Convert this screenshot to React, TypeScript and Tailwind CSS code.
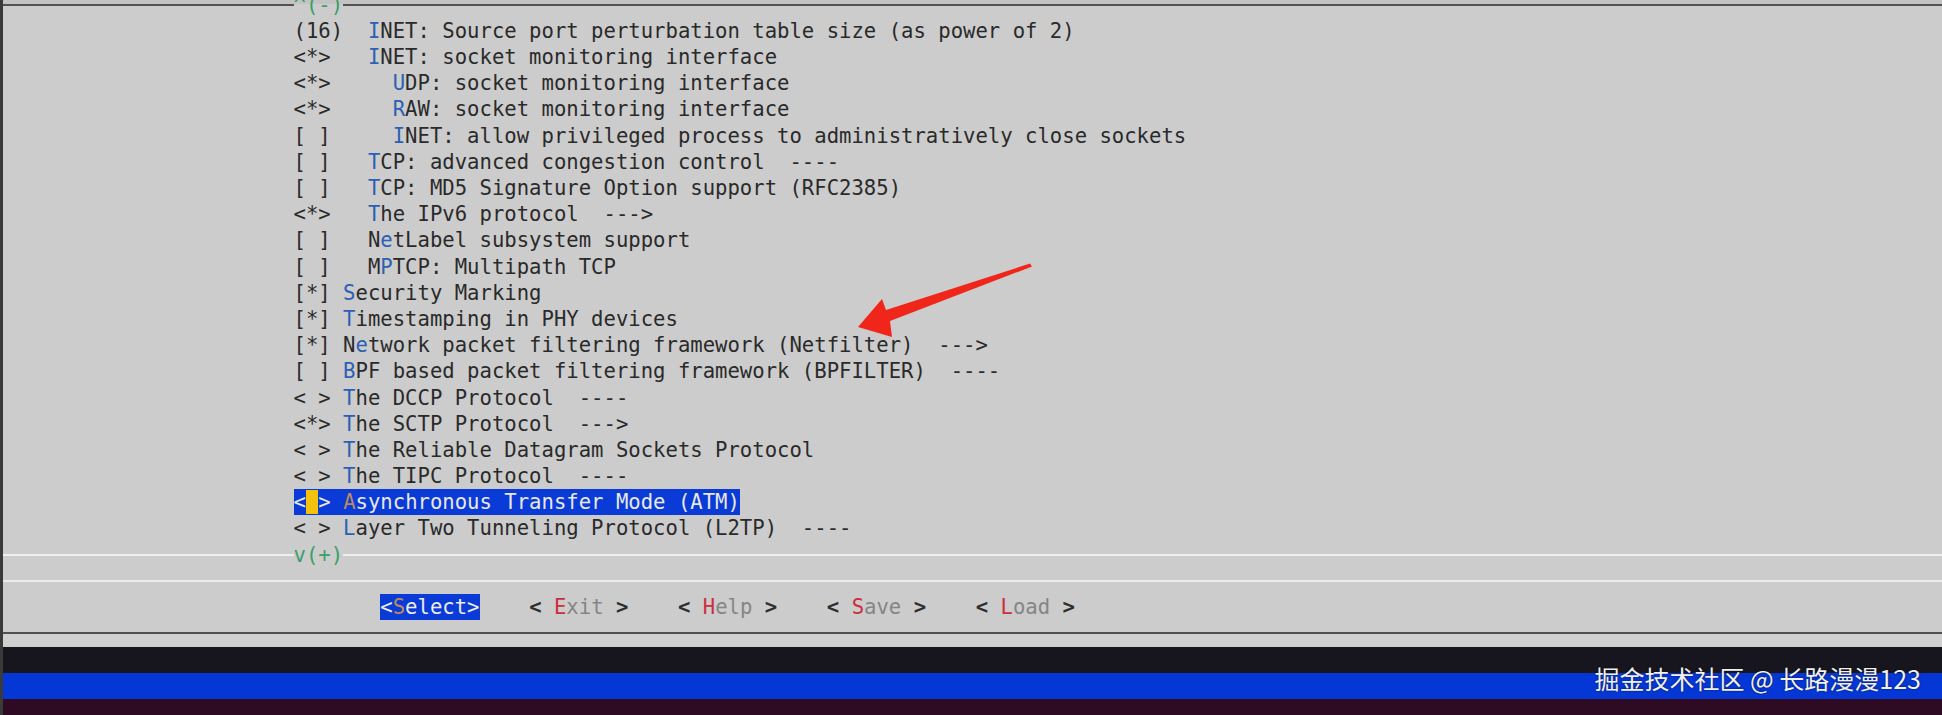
const items: [string, string, string, string][] = [
  ['(16)  ', '', 'I', 'NET: Source port perturbation table size (as power of 2)'],
  ['<*>   ', '', 'I', 'NET: socket monitoring interface'],
  ['<*>     ', '', 'U', 'DP: socket monitoring interface'],
  ['<*>     ', '', 'R', 'AW: socket monitoring interface'],
  ['[ ]     ', '', 'I', 'NET: allow privileged process to administratively close sockets'],
  ['[ ]   ', '', 'T', 'CP: advanced congestion control  ----'],
  ['[ ]   ', '', 'T', 'CP: MD5 Signature Option support (RFC2385)'],
  ['<*>   ', '', 'T', 'he IPv6 protocol  --->'],
  ['[ ]   ', 'N', 'e', 'tLabel subsystem support'],
  ['[ ]   ', 'M', 'P', 'TCP: Multipath TCP'],
  ['[*] ', '', 'S', 'ecurity Marking'],
  ['[*] ', '', 'T', 'imestamping in PHY devices'],
  ['[*] ', 'N', 'e', 'twork packet filtering framework (Netfilter)  --->'],
  ['[ ] ', '', 'B', 'PF based packet filtering framework (BPFILTER)  ----'],
  ['< > ', '', 'T', 'he DCCP Protocol  ----'],
  ['<*> ', '', 'T', 'he SCTP Protocol  --->'],
  ['< > ', '', 'T', 'he Reliable Datagram Sockets Protocol'],
  ['< > ', '', 'T', 'he TIPC Protocol  ----'],
]

const after: [string, string, string, string][] = [
  ['< > ', '', 'L', 'ayer Two Tunneling Protocol (L2TP)  ----'],
]

const buttons = [' Exit ', ' Help ', ' Save ', ' Load ']

function Row({ children }: { children: React.ReactNode }) {
  return <div className="flex h-[26.2px] shrink-0 items-center pl-[290.5px] whitespace-pre">{children}</div>
}

function Item({ it }: { it: [string, string, string, string] }) {
  return (
    <Row>
      <span>{it[0]}{it[1]}</span>
      <span className="text-[#2c60b4]">{it[2]}</span>
      <span>{it[3]}</span>
    </Row>
  )
}

export default function App() {
  return (
    <div className="relative w-[1942px] h-[715px] overflow-hidden bg-[#cccccc] border-l-[3px] border-[#3a3a3a] flex flex-col">
      {/* terminal */}
      <div className="h-[647px] shrink-0 overflow-hidden flex flex-col font-['DejaVu_Sans_Mono',monospace] text-[20.6px] leading-[26.2px] text-[#2a2a2a]">
        {/* top border with scroll-up marker */}
        <div className="-mt-[8.3px] flex h-[26.2px] shrink-0 items-center bg-[linear-gradient(to_bottom,#c3c3c3_12px,#cccccc_12px)]">
          <div className="w-[290.5px] h-[2px] bg-[#535353]" />
          <span className="text-[#3a9f69] whitespace-pre">^(-)</span>
          <div className="flex-1 h-[2px] bg-[#535353]" />
        </div>

        {items.map((it, i) => <Item key={i} it={it} />)}

        {/* selected */}
        <Row>
          <span className="bg-[#0a3bd6] text-[#e8e8e8]">
            <span>{'<'}</span>
            <span className="bg-[#f4c20d]">{' '}</span>
            <span>{'> '}</span>
            <span className="text-[#b98a62]">A</span>
            <span>synchronous Transfer Mode (ATM)</span>
          </span>
        </Row>

        {after.map((it, i) => <Item key={i} it={it} />)}

        {/* bottom border with scroll-down marker */}
        <div className="flex h-[26.2px] shrink-0 items-center">
          <div className="w-[290.5px] h-[2px] bg-[#efefef]" />
          <span className="text-[#3a9f69] whitespace-pre">v(+)</span>
          <div className="flex-1 h-[2px] bg-[#efefef]" />
        </div>

        <div className="flex h-[26.2px] shrink-0 items-center">
          <div className="flex-1 h-[2px] bg-[#ececec]" />
        </div>

        {/* buttons */}
        <Row>
          <span>{'       '}</span>
          <span className="bg-[#0a3bd6] text-[#ececec]">
            {'<'}<span className="text-[#b98a62]">S</span>{'elect>'}
          </span>
          {buttons.map((b, i) => (
            <span key={i}>
              <span>{'    '}</span>
              <span className="font-bold text-[#2e2e2e]">{'<'}</span>
              <span> </span>
              <span className="text-[#cc2f3b]">{b[1]}</span>
              <span className="text-[#858585]">{b.slice(2, 5)}</span>
              <span> </span>
              <span className="font-bold text-[#2e2e2e]">{'>'}</span>
            </span>
          ))}
        </Row>

        <div className="flex h-[26.2px] shrink-0 flex-col">
          <div className="h-[12px] bg-[#cccccc]" />
          <div className="h-[2px] bg-[#505050]" />
          <div className="flex-1 bg-[#d0d0d0]" />
        </div>
      </div>

      {/* recorder bars */}
      <div className="relative flex flex-1 flex-col">
        <div className="h-[26px] bg-[#17161e]" />
        <div className="h-[26px] bg-[#0537d6]" />
        <div className="flex-1 bg-[#2e0a23]" />
        <div className="absolute right-[21px] top-[19px] leading-none text-[25px] text-[#f0f0f0] font-['Noto_Sans_CJK_SC',sans-serif] whitespace-pre [text-shadow:0_0_2px_rgba(0,0,0,0.7)]">
          掘金技术社区 @ 长路漫漫123
        </div>
      </div>

      {/* annotation arrow */}
      <svg className="absolute left-[850px] top-[258px] pointer-events-none" width="185" height="85" viewBox="850 258 185 85">
        <polygon
          points="855,327 879,299 883,310 1027,263.5 1029,266.5 887,321 889,337"
          fill="#f1261b"
        />
      </svg>
    </div>
  )
}
